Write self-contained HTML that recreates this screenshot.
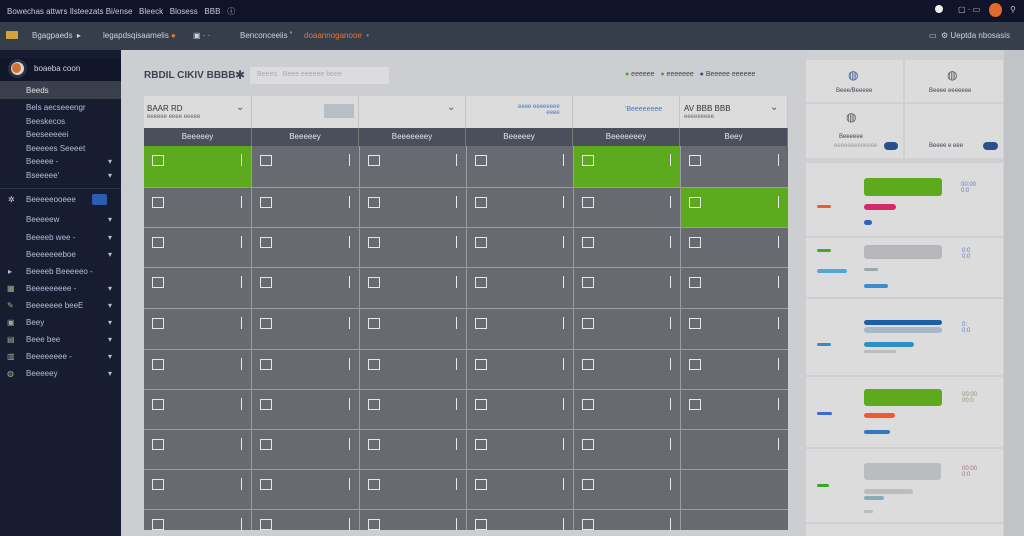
<!DOCTYPE html>
<html><head><meta charset="utf-8"><style>
*{margin:0;padding:0;box-sizing:border-box}
html,body{width:1024px;height:536px;overflow:hidden}
body{background:#cbccd0;font-family:"Liberation Sans",sans-serif;position:relative;font-size:9px}
.a{position:absolute}
#top{left:0;top:0;width:1024px;height:22px;background:#10132a;color:#c9ccd6}
#bar{left:0;top:22px;width:1024px;height:28px;background:#363d4b;color:#cfd3da}
#side{left:0;top:50px;width:121px;height:486px;background:#171c31;color:#a9b6d6}
#main{left:121px;top:50px;width:685px;height:486px;background:#cdced2}
#rp{left:806px;top:50px;width:198px;height:486px;background:#cfd0d3}
#rs{left:1004px;top:50px;width:20px;height:486px;background:#c2c3c7}
.grid{left:144px;top:146px;width:644px;height:384px;display:grid;grid-template-columns:107px 107px 106px 106px 106px 107px;grid-template-rows:41px 39px 39px 40px 40px 39px 39px 39px 39px 20px;gap:1px;background:#9a9ca1;overflow:hidden}
.grid i{background:#676a70;position:relative;overflow:hidden}
.grid i.g{background:#5eaa1f}
.grid i b{position:absolute;left:8px;top:9px;width:12px;height:11px;border:1px solid #e4e6e8}
.grid i s{position:absolute;right:9px;top:8px;width:1px;height:12px;background:#e6e8ea}
.hd{top:96px;height:32px;background:#dcdcdd;border-right:1px solid #c4c5c8}
.dh{top:128px;height:18px;background:#4a4f5b;color:#e2e4e8;font-size:8px;text-align:center;line-height:18px;border-right:1px solid #777}
.card{background:#dcdcdd}
.si{position:absolute;left:26px;font-size:8px;color:#b3bedb}
.dot{position:absolute;border-radius:3px;height:5px}
</style></head><body>
<div class="a" id="top"><span class="a" style="left:7px;top:6px;font-size:8px">Bowechas attwrs Ilsteezats Bi/ense &nbsp; Bleeck &nbsp; Blosess &nbsp; BBB &nbsp; ⓘ</span>
<span class="a" style="left:935px;top:5px;width:8px;height:8px;border-radius:50%;background:#eee"></span>
<span class="a" style="left:958px;top:5px;font-size:8px">▢ · ▭</span>
<span class="a" style="left:989px;top:3px;width:13px;height:14px;border-radius:50%;background:#e26a2c"></span>
<span class="a" style="left:1010px;top:5px;font-size:8px">⚲</span></div>
<div class="a" id="bar">
<span class="a" style="left:6px;top:9px;width:12px;height:8px;background:#d3a23d;border-radius:1px"></span>
<span class="a" style="left:32px;top:9px;font-size:8px">Bgagpaeds &nbsp;▸</span>
<span class="a" style="left:103px;top:9px;font-size:8px">legapdsqisaamelis <b style="color:#e07a2e">●</b></span>
<span class="a" style="left:193px;top:9px;font-size:8px">▣ · ·</span>
<span class="a" style="left:240px;top:9px;font-size:8px">Benconceeiis ˚</span>
<span class="a" style="left:304px;top:9px;font-size:8px;color:#e8733a">doaannoganooe &nbsp;•</span>
<span class="a" style="left:929px;top:9px;font-size:8px">▭ &nbsp;⚙ Ueptda nbosasis</span></div>
<div class="a" id="side">
<div class="a" style="left:0;top:8px;width:121px;height:30px;background:#12162a"></div>
<span class="a" style="left:8px;top:9px;width:19px;height:19px;border-radius:50%;background:#d6d7d9;border:3px solid #2a2f3a"></span>
<span class="a" style="left:12px;top:13px;width:9px;height:10px;border-radius:50%;background:#d3722f"></span>
<span class="a" style="left:34px;top:14px;font-size:8px;color:#cdd3e0">boaeba coon</span>
<div class="a" style="left:0;top:31px;width:121px;height:18px;background:#3a3f4c"></div>
<div class="a" style="left:121px;top:24px;width:3px;height:26px;background:#4eaa2a"></div>
<span class="si" style="top:36px;color:#dfe3ea">Beeds</span>
<span class="si" style="top:53px">Bels aecseeengr</span>
<span class="si" style="top:67px">Beeskecos</span>
<span class="si" style="top:80px">Beeseeeeei</span>
<span class="si" style="top:94px">Beeeees Seeeet</span>
<span class="si" style="top:107px">Beeeee -</span><span class="si" style="top:107px;left:108px">▾</span>
<span class="si" style="top:121px">Bseeeee'</span><span class="si" style="top:121px;left:108px">▾</span>
<div class="a" style="left:0;top:138px;width:121px;height:1px;background:#2c3246"></div>
<span class="si" style="top:145px;left:8px;color:#d6dbe6">✲</span><span class="si" style="top:145px">Beeeeeooeee</span>
<span class="a" style="left:92px;top:144px;width:15px;height:11px;background:#2c5cb0;border-radius:2px"></span>
<span class="si" style="top:165px">Beeeeew</span><span class="si" style="top:165px;left:108px">▾</span>
<span class="si" style="top:183px">Beeeeb wee -</span><span class="si" style="top:183px;left:108px">▾</span>
<span class="si" style="top:200px">Beeeeeeeboe</span><span class="si" style="top:200px;left:108px">▾</span>
<span class="si" style="top:217px;left:8px">▸</span><span class="si" style="top:217px">Beeeeb Beeeeeo -</span>
<span class="si" style="top:234px;left:7px;color:#9db08a">▦</span><span class="si" style="top:234px">Beeeeeeeee -</span><span class="si" style="top:234px;left:108px">▾</span>
<span class="si" style="top:251px;left:7px;color:#9db08a">✎</span><span class="si" style="top:251px">Beeeeeee beeE</span><span class="si" style="top:251px;left:108px">▾</span>
<span class="si" style="top:268px;left:7px;color:#9db08a">▣</span><span class="si" style="top:268px">Beey</span><span class="si" style="top:268px;left:108px">▾</span>
<span class="si" style="top:285px;left:7px;color:#9db08a">▤</span><span class="si" style="top:285px">Beee bee</span><span class="si" style="top:285px;left:108px">▾</span>
<span class="si" style="top:302px;left:7px;color:#9db08a">▥</span><span class="si" style="top:302px">Beeeeeeee -</span><span class="si" style="top:302px;left:108px">▾</span>
<span class="si" style="top:319px;left:7px;color:#9db08a">◍</span><span class="si" style="top:319px">Beeeeey</span><span class="si" style="top:319px;left:108px">▾</span>
</div>
<div class="a" id="main"></div>
<span class="a" style="left:144px;top:70px;font-size:10px;color:#3d4352;font-weight:bold">RBDIL CIKIV BBBB</span>
<span class="a" style="left:235px;top:68px;font-size:12px;color:#3d4352">✱</span>
<div class="a" style="left:250px;top:67px;width:139px;height:17px;background:#dcdcde"></div>
<span class="a" style="left:257px;top:71px;font-size:7px;color:#aaa">Beees &nbsp; Beee eeeeee beee</span>
<span class="a" style="left:625px;top:71px;font-size:7px;color:#444"><b style="color:#4daa2a">●</b> eeeeee &nbsp; <b style="color:#4daa2a">●</b> eeeeeee &nbsp; <b style="color:#3b4d7a">●</b> Beeeee eeeeee</span>
<div class="a hd" style="left:144px;width:108px"><span class="a" style="left:3px;top:8px;font-size:8px;color:#333">BAAR RD</span><span class="a" style="left:3px;top:18px;font-size:6px;color:#666">eeeeee eeee eeeee</span><span class="a" style="left:92px;top:6px;font-size:10px;color:#555">⌄</span></div>
<div class="a hd" style="left:252px;width:107px"><span class="a" style="left:72px;top:8px;width:30px;height:14px;background:#b9bdc6"></span></div>
<div class="a hd" style="left:359px;width:107px"><span class="a" style="left:88px;top:6px;font-size:10px;color:#555">⌄</span></div>
<div class="a hd" style="left:466px;width:107px"><span class="a" style="left:52px;top:8px;font-size:6px;color:#4a78b8;text-align:right">eeee eeeeeeee<br>&nbsp; &nbsp; &nbsp; &nbsp; eeee</span></div>
<div class="a hd" style="left:573px;width:107px"><span class="a" style="left:52px;top:10px;font-size:7px;color:#4a78b8">'Beeeeeeee</span></div>
<div class="a hd" style="left:680px;width:108px"><span class="a" style="left:4px;top:8px;font-size:8px;color:#333">AV BBB BBB</span><span class="a" style="left:4px;top:18px;font-size:6px;color:#666">eeeeeeeee</span><span class="a" style="left:90px;top:6px;font-size:10px;color:#555">⌄</span></div>
<div class="a dh" style="left:144px;width:108px">Beeeeey</div>
<div class="a dh" style="left:252px;width:107px">Beeeeey</div>
<div class="a dh" style="left:359px;width:107px">Beeeeeeey</div>
<div class="a dh" style="left:466px;width:107px">Beeeeey</div>
<div class="a dh" style="left:573px;width:107px">Beeeeeeey</div>
<div class="a dh" style="left:680px;width:108px">Beey</div>
<div class="a grid">
<i class="g"><b></b><s></s></i><i><b></b><s></s></i><i><b></b><s></s></i><i><b></b><s></s></i><i class="g"><b></b><s></s></i><i><b></b><s></s></i>
<i><b></b><s></s></i><i><b></b><s></s></i><i><b></b><s></s></i><i><b></b><s></s></i><i><b></b><s></s></i><i class="g"><b></b><s></s></i>
<i><b></b><s></s></i><i><b></b><s></s></i><i><b></b><s></s></i><i><b></b><s></s></i><i><b></b><s></s></i><i><b></b><s></s></i>
<i><b></b><s></s></i><i><b></b><s></s></i><i><b></b><s></s></i><i><b></b><s></s></i><i><b></b><s></s></i><i><b></b><s></s></i>
<i><b></b><s></s></i><i><b></b><s></s></i><i><b></b><s></s></i><i><b></b><s></s></i><i><b></b><s></s></i><i><b></b><s></s></i>
<i><b></b><s></s></i><i><b></b><s></s></i><i><b></b><s></s></i><i><b></b><s></s></i><i><b></b><s></s></i><i><b></b><s></s></i>
<i><b></b><s></s></i><i><b></b><s></s></i><i><b></b><s></s></i><i><b></b><s></s></i><i><b></b><s></s></i><i><b></b><s></s></i>
<i><b></b><s></s></i><i><b></b><s></s></i><i><b></b><s></s></i><i><b></b><s></s></i><i><b></b><s></s></i><i><s></s></i>
<i><b></b><s></s></i><i><b></b><s></s></i><i><b></b><s></s></i><i><b></b><s></s></i><i><b></b><s></s></i><i></i>
<i><b></b><s></s></i><i><b></b><s></s></i><i><b></b><s></s></i><i><b></b><s></s></i><i><b></b><s></s></i><i></i>
</div>
<div class="a" id="rp"></div>
<div class="a" id="rs"></div>
<div class="a card" style="left:806px;top:60px;width:97px;height:42px"><span class="a" style="left:42px;top:8px;font-size:12px;color:#3b5a8e">◍</span><span class="a" style="left:30px;top:28px;font-size:6px;color:#445">Beee/Beeeee</span></div>
<div class="a card" style="left:905px;top:60px;width:98px;height:42px"><span class="a" style="left:42px;top:8px;font-size:12px;color:#555">◍</span><span class="a" style="left:24px;top:28px;font-size:6px;color:#445">Beeee eeeeeee</span></div>
<div class="a card" style="left:806px;top:104px;width:97px;height:54px"><span class="a" style="left:40px;top:6px;font-size:12px;color:#555">◍</span><span class="a" style="left:33px;top:30px;font-size:6px;color:#445">Beeeeee</span><span class="a" style="left:28px;top:39px;font-size:6px;color:#999">eeeeeeeeeeeee</span><span class="a" style="left:78px;top:38px;width:14px;height:8px;border-radius:4px;background:#2a4f8c"></span></div>
<div class="a card" style="left:905px;top:104px;width:98px;height:54px"><span class="a" style="left:24px;top:39px;font-size:6px;color:#445">Beeee e eee</span><span class="a" style="left:78px;top:38px;width:15px;height:8px;border-radius:4px;background:#2a4f8c"></span></div>
<div class="a card" style="left:806px;top:163px;width:197px;height:73px"></div>
<div class="a card" style="left:806px;top:238px;width:197px;height:59px"></div>
<div class="a card" style="left:806px;top:299px;width:197px;height:76px"></div>
<div class="a card" style="left:806px;top:377px;width:197px;height:70px"></div>
<div class="a card" style="left:806px;top:449px;width:197px;height:73px"></div>
<div class="a card" style="left:806px;top:524px;width:197px;height:12px"></div>
<div class="dot" style="left:864px;top:178px;width:78px;height:18px;background:#5eaa1f"></div>
<div class="dot" style="left:864px;top:204px;width:32px;height:6px;background:#d42a6a"></div>
<div class="dot" style="left:817px;top:205px;width:14px;height:3px;background:#ee5a2a"></div>
<div class="dot" style="left:864px;top:220px;width:8px;height:5px;background:#3060c0"></div>
<span class="a" style="left:961px;top:182px;font-size:6px;color:#6a7ac8">00:00<br>0:0</span>
<div class="dot" style="left:864px;top:245px;width:78px;height:14px;background:#b5b7ba"></div>
<div class="dot" style="left:817px;top:249px;width:14px;height:3px;background:#4aa52a"></div>
<div class="dot" style="left:817px;top:269px;width:30px;height:4px;background:#4fa8d8"></div>
<div class="dot" style="left:864px;top:268px;width:14px;height:3px;background:#9aa"></div>
<div class="dot" style="left:864px;top:284px;width:24px;height:4px;background:#3a8ed0"></div>
<span class="a" style="left:962px;top:248px;font-size:6px;color:#6a7ac8">0:0<br>0:0</span>
<div class="dot" style="left:864px;top:320px;width:78px;height:5px;background:#1f5fa8"></div>
<div class="dot" style="left:864px;top:327px;width:78px;height:6px;background:#a9b8c6"></div>
<div class="dot" style="left:864px;top:342px;width:50px;height:5px;background:#2f8ec4"></div>
<div class="dot" style="left:864px;top:350px;width:32px;height:3px;background:#bbb"></div>
<div class="dot" style="left:817px;top:343px;width:14px;height:3px;background:#2f8ec4"></div>
<span class="a" style="left:962px;top:322px;font-size:6px;color:#6a7ac8">0:<br>0:0</span>
<div class="dot" style="left:864px;top:389px;width:78px;height:17px;background:#5eaa1f"></div>
<div class="dot" style="left:864px;top:413px;width:31px;height:5px;background:#f05a30"></div>
<div class="dot" style="left:864px;top:430px;width:26px;height:4px;background:#2f7ac0"></div>
<div class="dot" style="left:817px;top:412px;width:15px;height:3px;background:#3a6ad0"></div>
<span class="a" style="left:962px;top:392px;font-size:6px;color:#8a9a6a">00:00<br>00:0</span>
<div class="dot" style="left:864px;top:463px;width:77px;height:17px;background:#bbbcbf"></div>
<div class="dot" style="left:864px;top:489px;width:49px;height:5px;background:#bcbdc0"></div>
<div class="dot" style="left:864px;top:496px;width:20px;height:4px;background:#88aabb"></div>
<div class="dot" style="left:864px;top:510px;width:9px;height:3px;background:#bbb"></div>
<div class="dot" style="left:817px;top:484px;width:12px;height:3px;background:#3aa52a"></div>
<span class="a" style="left:962px;top:466px;font-size:6px;color:#a0708a">00:00<br>0:0</span>
</body></html>
